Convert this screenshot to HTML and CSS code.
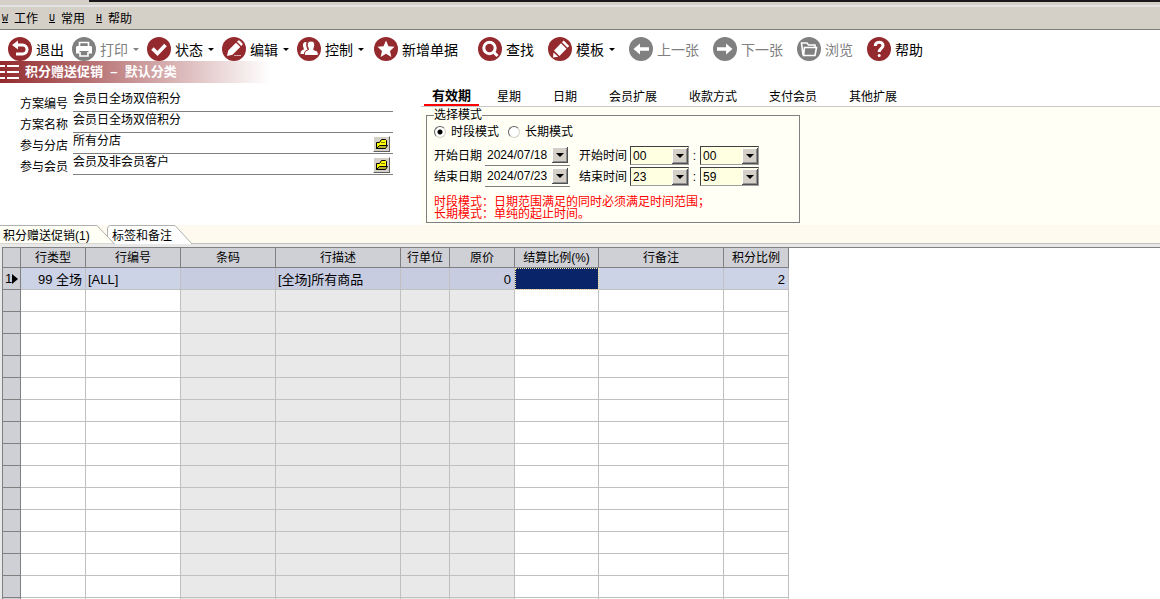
FILE: index.html
```html
<!DOCTYPE html>
<html lang="zh-CN">
<head>
  <meta charset="UTF-8" />
  <meta name="viewport" content="width=device-width, initial-scale=1.0" />
  <title>积分赠送促销</title>
  <link rel="stylesheet" href="styles.css">
</head>
<body>
  <div class="window-edge"></div>
  <nav class="menu">
    <a href="#"><u>W</u>工作</a>
    <a href="#"><u>U</u>常用</a>
    <a href="#"><u>H</u>帮助</a>
  </nav>

  <div class="toolbar">
    <div class="group">
      <button type="button" class="tool">
        <svg viewBox="0 0 24 24"><circle cx="12" cy="12" r="12"/><path class="line" d="M7 8h7.500a4.500 4.500 0 0 1 0 9H8"/><path class="fill" d="M4 8l6-4.500v9z"/></svg>
        <span>退出</span>
      </button>
      <button type="button" class="tool" disabled>
        <svg viewBox="0 0 24 24"><circle cx="12" cy="12" r="12"/><path class="thin" d="M7.500 9V5.500h9V9M8 15v4h8v-4"/><path class="fill" d="M5 9h14l1 1v6.500h-3.500V14h-9v2.500H4V10z"/></svg>
        <span>打印</span><i class="caret"></i>
      </button>
      <button type="button" class="tool">
        <svg viewBox="0 0 24 24"><circle cx="12" cy="12" r="12"/><path class="bold" d="M5.500 11.500l5 5 8-8.500"/></svg>
        <span>状态</span><i class="caret"></i>
      </button>
      <button type="button" class="tool">
        <svg viewBox="0 0 24 24"><circle cx="12" cy="12" r="12"/><path class="fill" d="M5 19l1.200-5.500L14 5.700l4.300 4.300L10.500 17.800zM15 4.700l1.200-1.200h1.300l3 3v1.300L19.300 9z"/><path class="fade" d="M12 18.500h7"/></svg>
        <span>编辑</span><i class="caret"></i>
      </button>
      <button type="button" class="tool">
        <svg viewBox="0 0 24 24"><circle cx="12" cy="12" r="12"/><path class="fill" d="M9.500 5C7 4.500 5.500 6.500 6 9c.3 1.500 1 2.200.8 3.500-1.500.8-3.300 1-3.300 4.500h4c.3-2.500 2.500-3 3.500-3.700-2-3-2-6.300-1.500-8.300z"/><path class="fill front" d="M14 4c2.800 0 4 2 3.700 4.500-.2 1.800-1 2.800-1 4.200 1.500.8 4.500 1 4.500 3.500V18.500H7.500v-2.300c0-2.400 2.700-2.700 4-3.500 0-1.400-.9-2.400-1.200-4.200C10 6 11.200 4 14 4z"/></svg>
        <span>控制</span><i class="caret"></i>
      </button>
    </div>
    <div class="group">
      <button type="button" class="tool">
        <svg viewBox="0 0 24 24"><circle cx="12" cy="12" r="12"/><path class="fill" d="M12 3.500l2.500 5.700 6 .6-4.500 4.200 1.300 6-5.300-3.200L6.700 20 8 14 3.500 9.800l6-.6z"/></svg>
        <span>新增单据</span>
      </button>
    </div>
    <div class="group wide">
      <button type="button" class="tool">
        <svg viewBox="0 0 24 24"><circle cx="12" cy="12" r="12"/><circle class="line" cx="11.500" cy="11" r="5.700"/><path class="line" d="M15.500 15l4 4"/></svg>
        <span>查找</span>
      </button>
      <button type="button" class="tool">
        <svg viewBox="0 0 24 24"><circle cx="12" cy="12" r="12"/><path class="fill" d="M5 20.500l.5-5 4.700 4.200zM6 13.500l7-7.200 5.500 5.500-7 7.200zM14 5.300l1.700-1.700 5.500 5.500-1.700 1.700z"/></svg>
        <span>模板</span><i class="caret"></i>
      </button>
      <button type="button" class="tool" disabled>
        <svg viewBox="0 0 24 24"><circle cx="12" cy="12" r="12"/><path class="fill" d="M4.500 12L11 6.500v3.700h9v3.600h-9v3.700z"/></svg>
        <span>上一张</span>
      </button>
      <button type="button" class="tool" disabled>
        <svg viewBox="0 0 24 24"><circle cx="12" cy="12" r="12"/><path class="fill" d="M19.500 12L13 6.500v3.700H4v3.600h9v3.700z"/></svg>
        <span>下一张</span>
      </button>
      <button type="button" class="tool" disabled>
        <svg viewBox="0 0 24 24"><circle cx="12" cy="12" r="12"/><path class="thin" d="M6 18L4.500 6H10l1.500 2H18v2.500M7.500 10.500h12L18 18.500H6.500z"/></svg>
        <span>浏览</span>
      </button>
      <button type="button" class="tool">
        <svg viewBox="0 0 24 24"><circle cx="12" cy="12" r="12"/><path class="line" d="M8.300 9c0-5 7.700-5 7.700-.5 0 2.800-3.800 3-3.800 6.500"/><circle class="fill" cx="12.200" cy="18.500" r="1.500"/></svg>
        <span>帮助</span>
      </button>
    </div>
  </div>

  <div class="title">
    <svg viewBox="0 0 20 22"><path d="M0 5h5M0 11h5M0 17h5M7 5h12M7 11h12M7 17h12"/></svg>
    <h1>积分赠送促销&nbsp; – &nbsp;默认分类</h1>
  </div>

  <main class="detail">
    <form class="plan">
      <div class="row">
        <label for="code">方案编号</label>
        <div class="field"><input id="code" type="text" value="会员日全场双倍积分"></div>
      </div>
      <div class="row">
        <label for="name">方案名称</label>
        <div class="field"><input id="name" type="text" value="会员日全场双倍积分"></div>
      </div>
      <div class="row">
        <label for="shop">参与分店</label>
        <div class="field">
          <input id="shop" type="text" value="所有分店">
          <button type="button" class="browse" aria-label="选择分店"><svg viewBox="0 0 13 12"><path d="M1.500 10.500v-6h3l2-3h4l1 1v5z"/><path class="flap" d="M1.500 10.500l3-3h8l-2 3z"/><path class="mark" d="M6 4.500h4"/></svg></button>
        </div>
      </div>
      <div class="row">
        <label for="member">参与会员</label>
        <div class="field">
          <input id="member" type="text" value="会员及非会员客户">
          <button type="button" class="browse" aria-label="选择会员"><svg viewBox="0 0 13 12"><path d="M1.500 10.500v-6h3l2-3h4l1 1v5z"/><path class="flap" d="M1.500 10.500l3-3h8l-2 3z"/><path class="mark" d="M6 4.500h4"/></svg></button>
        </div>
      </div>
    </form>

    <section class="options">
      <div class="tabs">
        <button type="button" class="active">有效期</button>
        <button type="button">星期</button>
        <button type="button">日期</button>
        <button type="button">会员扩展</button>
        <button type="button">收款方式</button>
        <button type="button">支付会员</button>
        <button type="button">其他扩展</button>
      </div>
      <div class="panel">
        <fieldset>
          <legend>选择模式</legend>
          <div class="modes">
            <label><input type="radio" name="mode" checked>时段模式</label>
            <label><input type="radio" name="mode">长期模式</label>
          </div>
          <div class="period">
            <label for="d1">开始日期</label>
            <div class="date"><input id="d1" type="text" value="2024/07/18"><button type="button" class="drop" aria-label="开始日期"></button></div>
            <label for="h1">开始时间</label>
            <select id="h1"><option>00</option></select>
            <span class="colon">:</span>
            <select aria-label="开始分钟"><option>00</option></select>
          </div>
          <div class="period">
            <label for="d2">结束日期</label>
            <div class="date"><input id="d2" type="text" value="2024/07/23"><button type="button" class="drop" aria-label="结束日期"></button></div>
            <label for="h2">结束时间</label>
            <select id="h2"><option>23</option></select>
            <span class="colon">:</span>
            <select aria-label="结束分钟"><option>59</option></select>
          </div>
          <p class="note">时段模式：日期范围满足的同时必须满足时间范围；<br>长期模式：单纯的起止时间。</p>
        </fieldset>
      </div>
    </section>
  </main>

  <div class="sheets">
    <button type="button" class="sheet current">
      <svg viewBox="0 0 115 19" preserveAspectRatio="none"><path d="M-1 .5H97L114.500 19H-1z"/></svg>
      <span>积分赠送促销(1)</span>
    </button>
    <button type="button" class="sheet">
      <svg viewBox="0 0 86 19" preserveAspectRatio="none"><path d="M.5 20V3L2.500 .5H68L85.500 19.500z"/></svg>
      <span>标签和备注</span>
    </button>
  </div>

  <div class="grid">
    <table>
      <colgroup>
        <col class="c-head"><col class="c-65"><col class="c-95"><col class="c-95"><col class="c-125"><col class="c-49"><col class="c-65"><col class="c-84"><col class="c-125"><col class="c-65">
      </colgroup>
      <thead>
        <tr><th></th><th>行类型</th><th>行编号</th><th>条码</th><th>行描述</th><th>行单位</th><th>原价</th><th>结算比例(%)</th><th>行备注</th><th>积分比例</th></tr>
      </thead>
      <tbody>
        <tr class="selected"><th>1<i></i></th><td class="num">99 全场</td><td>[ALL]</td><td></td><td>[全场]所有商品</td><td></td><td class="num">0</td><td class="focus"></td><td></td><td class="num">2</td></tr>
        <tr><th></th><td></td><td></td><td></td><td></td><td></td><td></td><td></td><td></td><td></td></tr>
        <tr><th></th><td></td><td></td><td></td><td></td><td></td><td></td><td></td><td></td><td></td></tr>
        <tr><th></th><td></td><td></td><td></td><td></td><td></td><td></td><td></td><td></td><td></td></tr>
        <tr><th></th><td></td><td></td><td></td><td></td><td></td><td></td><td></td><td></td><td></td></tr>
        <tr><th></th><td></td><td></td><td></td><td></td><td></td><td></td><td></td><td></td><td></td></tr>
        <tr><th></th><td></td><td></td><td></td><td></td><td></td><td></td><td></td><td></td><td></td></tr>
        <tr><th></th><td></td><td></td><td></td><td></td><td></td><td></td><td></td><td></td><td></td></tr>
        <tr><th></th><td></td><td></td><td></td><td></td><td></td><td></td><td></td><td></td><td></td></tr>
        <tr><th></th><td></td><td></td><td></td><td></td><td></td><td></td><td></td><td></td><td></td></tr>
        <tr><th></th><td></td><td></td><td></td><td></td><td></td><td></td><td></td><td></td><td></td></tr>
        <tr><th></th><td></td><td></td><td></td><td></td><td></td><td></td><td></td><td></td><td></td></tr>
        <tr><th></th><td></td><td></td><td></td><td></td><td></td><td></td><td></td><td></td><td></td></tr>
        <tr><th></th><td></td><td></td><td></td><td></td><td></td><td></td><td></td><td></td><td></td></tr>
        <tr><th></th><td></td><td></td><td></td><td></td><td></td><td></td><td></td><td></td><td></td></tr>
        <tr><th></th><td></td><td></td><td></td><td></td><td></td><td></td><td></td><td></td><td></td></tr>
      </tbody>
    </table>
  </div>
</body>
</html>
```

FILE: styles.css
```css
* {
  box-sizing: border-box;
}

body {
  margin: 0;
  height: 100vh;
  overflow: hidden;
  display: flex;
  flex-direction: column;
  background: #fff;
  color: #000;
  font: 12px/16px "Liberation Sans", "Noto Sans CJK SC", sans-serif;
}

button, input, select {
  font: inherit;
  color: inherit;
  margin: 0;
  padding: 0;
  border: 0;
  border-radius: 0;
  background: none;
  outline: none;
}

/* top edge and menu */
.window-edge {
  flex: none;
  height: 7px;
  background: linear-gradient(#1a161c, #1a161c) 89px 0 / 100% 2px no-repeat, #d4cfc7;
  border-bottom: 2px solid #e3e2e5;
}

.menu {
  flex: none;
  display: flex;
  gap: 11px;
  height: 23px;
  padding: 4px 2px 0;
  background: #d4cfc7;
  border-bottom: 1px solid #808080;
}

.menu a {
  display: flex;
  gap: 6px;
  color: #000;
  text-decoration: none;
}

.menu u {
  font-family: "Liberation Mono", monospace;
  font-size: 10px;
}

/* toolbar */
.toolbar {
  flex: none;
  display: flex;
  padding: 7px 8px 0;
}

.group {
  display: flex;
  gap: 8px;
  margin-right: 10px;
}

.group + .group {
  margin-right: 20px;
}

.group.wide {
  gap: 14px;
}

.tool {
  display: flex;
  align-items: center;
  height: 24px;
  font-size: 14px;
  white-space: nowrap;
}

.tool span {
  padding-top: 2px;
}

.tool svg {
  width: 24px;
  height: 24px;
  margin-right: 4px;
  fill: #942a2e;
}

.tool svg path {
  fill: none;
  stroke: #fff;
}

.tool svg .line {
  fill: none;
  stroke: #fff;
  stroke-width: 3;
}

.tool .thin {
  stroke-width: 1.6;
}

.tool .bold {
  stroke-width: 3.6;
}

.tool svg .fill {
  fill: #fff;
  stroke: none;
}

.tool svg .front {
  stroke: #942a2e;
}

.tool .fade {
  opacity: .6;
}

.tool:disabled {
  color: #808080;
}

.tool:disabled svg {
  fill: #808080;
}

.caret {
  margin-left: 5px;
  border: 3px solid transparent;
  border-top-color: currentColor;
  border-bottom: 0;
}

.title {
  flex: none;
  display: flex;
  align-items: center;
  gap: 5px;
  width: 270px;
  height: 22px;
  background: linear-gradient(to right, #932a2d, #fff);
}

.title svg {
  width: 20px;
  height: 22px;
  stroke: #fff;
  stroke-width: 2;
}

.title h1 {
  margin: 0;
  color: #fff;
  font-size: 13px;
  line-height: 20px;
}

/* plan header */
.detail {
  flex: none;
  display: flex;
  height: 142px;
}

.plan {
  width: 421px;
  padding: 8px 28px 0 20px;
}

.row {
  display: flex;
  gap: 5px;
  height: 21px;
}

.row label {
  padding-top: 5px;
}

.field {
  flex: 1;
  display: flex;
  align-items: flex-end;
  border-bottom: 1px solid #808080;
}

.field input {
  flex: 1;
  min-width: 0;
  height: 20px;
  padding-bottom: 7px;
}

.browse {
  width: 17px;
  height: 16px;
  margin: 0 3px 1px 0;
  background: #d4d0c8;
  border: 1px solid;
  border-color: #fff #606060 #606060 #fff;
  display: flex;
  align-items: center;
  justify-content: center;
}

.browse svg {
  flex: none;
  width: 13px;
  height: 12px;
  fill: #ffff00;
  stroke: #000;
}

.browse .flap {
  fill: #b8b430;
}

.browse .mark {
  stroke: #808000;
}

.options {
  flex: 1;
  display: flex;
  flex-direction: column;
}

.tabs {
  display: flex;
  height: 24px;
  padding: 4px 0 0 3px;
  border-bottom: 1px solid #c8c8c8;
}

.tabs button {
  padding: 0 16px;
}

.tabs .active {
  margin-right: 2px;
  padding: 0 8px;
  font-size: 13px;
  font-weight: bold;
  border-bottom: 2px solid #f00;
}

.panel {
  flex: 1;
  padding: 0 5px;
  background: #fffff5;
}

fieldset {
  max-width: 374px;
  margin: 0;
  padding: 0 7px 2px;
  border: 1px solid #808080;
}

legend {
  padding: 0;
}

.modes {
  display: flex;
  gap: 9px;
  height: 18px;
  margin-bottom: 4px;
}

.modes label {
  display: flex;
  align-items: center;
  gap: 5px;
}

.modes input {
  appearance: none;
  width: 12px;
  height: 12px;
  border: 1px solid;
  border-color: #606060 #d4d0c8 #d4d0c8 #606060;
  border-radius: 50%;
  background: #fff;
}

.modes input:checked {
  background: radial-gradient(#000 2px, #fff 3px);
}

.period {
  display: flex;
  align-items: center;
  height: 21px;
}

.date {
  display: flex;
  align-items: center;
  width: 85px;
  height: 21px;
  margin: 0 9px 0 3px;
  padding: 0 2px;
  border-bottom: 1px solid #808080;
}

.date input {
  width: 65px;
}

.drop {
  width: 16px;
  height: 16px;
}

.drop, .period select {
  background: #ffffe1 url("data:image/svg+xml,%3Csvg xmlns='http://www.w3.org/2000/svg' width='16' height='16'%3E%3Cpath fill='%23d4d0c8' d='M0 0h16v16H0z'/%3E%3Cpath fill='%23fff' d='M0 0h15v1H1v14H0z'/%3E%3Cpath fill='%23505050' d='M15 0h1v16H0v-1h15z'/%3E%3Cpath fill='%23909090' d='M14 1h1v14H1v-1h13z'/%3E%3Cpath d='M4 6h8l-4 4z'/%3E%3C/svg%3E") right center no-repeat;
}

.period select {
  appearance: none;
  width: 59px;
  height: 19px;
  padding-left: 2px;
  border: 1px solid;
  border-color: #404040 #a0a0a0 #a0a0a0 #404040;
}

.date + label {
  margin-right: 3px;
}

.colon {
  width: 11px;
  text-align: center;
}

.note {
  margin: 9px 0 0;
  color: #f00;
  line-height: 12px;
}

/* sheet tabs */
.sheets {
  flex: none;
  display: flex;
  height: 19px;
  background: #fffaf0;
  border-bottom: 1px solid #c0c0c0;
}

.sheet {
  position: relative;
  width: 86px;
  height: 19px;
  padding: 2px 0 0 5px;
  text-align: left;
  white-space: nowrap;
}

.sheet.current {
  z-index: 1;
  width: 115px;
  margin-right: -8px;
  padding-left: 3px;
}

.sheet svg {
  position: absolute;
  inset: 0;
  width: 100%;
  height: 100%;
  fill: #fff;
  stroke: #b0b0b0;
}

.sheet.current svg {
  fill: #fffff5;
}

.sheet span {
  position: relative;
}

/* grid */
.grid {
  flex: 1;
  min-height: 0;
  overflow: hidden;
  border-top: 3px solid #e8e8e8;
  border-left: 2px solid #e8e8e8;
}

.grid::before {
  content: "";
  display: block;
  height: 1px;
  background: #808080;
}

table {
  width: 787px;
  table-layout: fixed;
  border-collapse: separate;
  border-spacing: 0;
}

.c-head { width: 19px; }
.c-49 { width: 49px; }
.c-65 { width: 65px; }
.c-84 { width: 84px; }
.c-95 { width: 95px; }
.c-125 { width: 125px; }

th, td {
  height: 22px;
  padding: 0 2px;
  border: 0 solid #c0c0c0;
  border-width: 0 1px 1px 0;
  line-height: 16px;
  text-align: left;
  white-space: nowrap;
}

th {
  background: #cfd0d6;
  border-color: #808080;
  font-weight: normal;
}

th:first-child {
  border-left-width: 1px;
}

thead th {
  height: 20px;
  padding: 0;
  text-align: center;
}

td:nth-child(n+4):nth-child(-n+7) {
  background: #e9e9e9;
}

td:nth-child(6) {
  background: #e5e5e5;
}

.selected td {
  padding: 2px 2px 0;
  background: #cdd3e6;
  font-size: 13px;
}

.selected td:nth-child(n+4):nth-child(-n+7) {
  background: #c7cce0;
}

.selected td.focus {
  background: #0a246a;
  outline: 1px dotted #ffe9a0;
  outline-offset: -1px;
}

.selected th {
  padding: 0 2px;
  font-size: 13px;
}

.selected i {
  display: inline-block;
  border: 5px solid transparent;
  border-left: 6px solid #000;
  border-right: 0;
  vertical-align: -1px;
}

.selected .num {
  padding-right: 3px;
  text-align: right;
}
```
